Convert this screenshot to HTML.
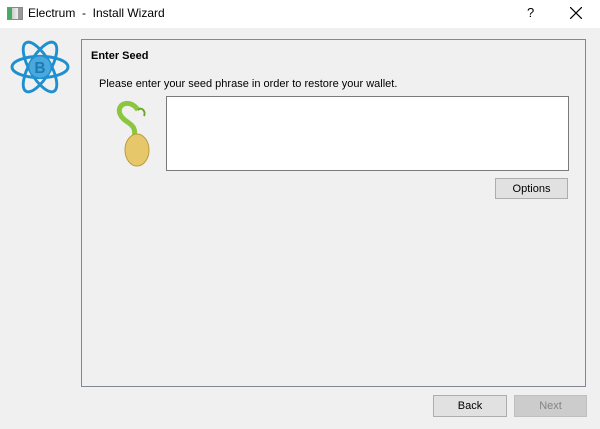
<!DOCTYPE html>
<html><head><style>
body{margin:0;width:600px;height:429px;background:#f0f0f0;font-family:"Liberation Sans",sans-serif;font-size:11px;color:#000;position:relative;overflow:hidden}
.a{position:absolute}
.tb{left:0;top:0;width:600px;height:28px;background:#fff}
.btn{position:absolute;background:#e1e1e1;border:1px solid #adadad;box-sizing:border-box;text-align:center;line-height:20px;font-size:11px}
</style></head><body>
<div class="a tb">
 <div class="a" style="left:7px;top:7px;width:14px;height:11px;border:1px solid #888;background:linear-gradient(90deg,#4a6 0,#4a6 4px,#ccc 4px,#eee 10px,#999 10px)"></div>
 <div class="a" style="left:28px;top:6px;font-size:12px">Electrum&nbsp; - &nbsp;Install Wizard</div>
 <div class="a" style="left:527px;top:5px;font-size:13px">?</div>
 <svg class="a" style="left:570px;top:7px" width="12" height="12"><path d="M0 0L12 12M12 0L0 12" stroke="#000" stroke-width="1.2"/></svg>
</div>
<svg class="a" style="left:9px;top:39px" width="62" height="56" viewBox="0 0 64 58">
 <g fill="none" stroke="#1e8fcf" stroke-width="3">
  <ellipse cx="32" cy="29" rx="29" ry="11"/>
  <ellipse cx="32" cy="29" rx="29" ry="11" transform="rotate(60 32 29)"/>
  <ellipse cx="32" cy="29" rx="29" ry="11" transform="rotate(-60 32 29)"/>
 </g>
 <circle cx="32" cy="29" r="11" fill="#4aa8dc"/>
 <text x="32" y="35" text-anchor="middle" font-family="Liberation Sans" font-weight="bold" font-size="16" fill="#1a7bb8">B</text>
</svg>
<div class="a" style="left:81px;top:39px;width:505px;height:348px;border:1px solid #828790;box-sizing:border-box"></div>
<div class="a" style="left:91px;top:50px;font-weight:bold">Enter Seed</div>
<div class="a" style="left:99px;top:78px">Please enter your seed phrase in order to restore your wallet.</div>
<svg class="a" style="left:108px;top:100px" width="48" height="68" viewBox="0 0 48 68">
 <path d="M30 10 C22 -2 8 4 12 14 C16 24 30 22 26 38" fill="none" stroke="#8cc63e" stroke-width="5"/>
 <path d="M30 10 C34 6 38 12 36 16" fill="none" stroke="#6aa52a" stroke-width="2"/>
 <ellipse cx="29" cy="50" rx="12" ry="16" fill="#e6c76a" stroke="#b99b3e"/>
</svg>
<div class="a" style="left:166px;top:96px;width:403px;height:75px;background:#fff;border:1px solid #7a7a7a;box-sizing:border-box"></div>
<div class="btn" style="left:495px;top:178px;width:73px;height:21px">Options</div>
<div class="btn" style="left:433px;top:395px;width:74px;height:22px;line-height:21px">Back</div>
<div class="btn" style="left:514px;top:395px;width:73px;height:22px;line-height:21px;background:#cccccc;border-color:#bfbfbf;color:#838383">Next</div>
</body></html>
